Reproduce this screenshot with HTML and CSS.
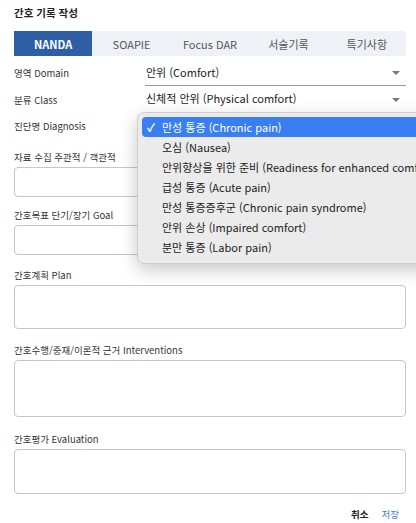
FILE: index.html
```html
<!DOCTYPE html>
<html lang="ko">
<head>
<meta charset="utf-8">
<title>간호 기록 작성</title>
<link rel="stylesheet" href="styles.css">
</head>
<body>
<div class="page">
  <h1 class="title">간호 기록 작성</h1>
  <div class="tabs">
    <div class="tab active">NANDA</div>
    <div class="tab">SOAPIE</div>
    <div class="tab">Focus DAR</div>
    <div class="tab">서술기록</div>
    <div class="tab">특기사항</div>
  </div>

  <div class="row">
    <div class="row-label">영역 Domain</div>
    <div class="select"><span>안위 (Comfort)</span><i class="caret"></i></div>
  </div>
  <div class="row">
    <div class="row-label">분류 Class</div>
    <div class="select"><span>신체적 안위 (Physical comfort)</span><i class="caret"></i></div>
  </div>
  <div class="row diag">
    <div class="row-label">진단명 Diagnosis</div>
    <div class="select"><span></span><i class="caret"></i></div>
    <div class="popup">
      <div class="opt selected"><span class="check">✓</span>만성 통증 (Chronic pain)</div>
      <div class="opt">오심 (Nausea)</div>
      <div class="opt">안위향상을 위한 준비 (Readiness for enhanced comfort)</div>
      <div class="opt">급성 통증 (Acute pain)</div>
      <div class="opt">만성 통증증후군 (Chronic pain syndrome)</div>
      <div class="opt">안위 손상 (Impaired comfort)</div>
      <div class="opt">분만 통증 (Labor pain)</div>
    </div>
  </div>

  <div class="field f1">
    <div class="field-label">자료 수집 주관적 / 객관적</div>
    <textarea class="box h30"></textarea>
  </div>
  <div class="field f2">
    <div class="field-label">간호목표 단기/장기 Goal</div>
    <textarea class="box h30"></textarea>
  </div>
  <div class="field f3">
    <div class="field-label">간호계획 Plan</div>
    <textarea class="box h44"></textarea>
  </div>
  <div class="field f4">
    <div class="field-label">간호수행/중재/이론적 근거 Interventions</div>
    <textarea class="box h57"></textarea>
  </div>
  <div class="field f5">
    <div class="field-label">간호평가 Evaluation</div>
    <textarea class="box h45"></textarea>
  </div>

  <div class="actions">
    <button class="btn cancel">취소</button>
    <button class="btn save">저장</button>
  </div>
</div>
</body>
</html>
```

FILE: styles.css
```css
html, body {
  margin: 0;
  padding: 0;
  background: #ffffff;
  overflow: hidden;
}
body {
  font-family: "Noto Sans CJK KR", "Noto Sans", sans-serif;
  color: #333;
  width: 416px;
  height: 523px;
}
.page {
  padding: 5px 10px 0 14px;
}
.title {
  margin: 0;
  font-size: 10.5px;
  line-height: 16px;
  font-weight: 700;
  color: #222;
}
.tabs {
  margin-top: 10px;
  display: grid;
  grid-template-columns: repeat(5, 1fr);
  height: 25px;
  background: #eef2f7;
  border-radius: 0 3px 3px 0;
}
.tab {
  display: flex;
  align-items: center;
  justify-content: center;
  font-size: 11px;
  color: #555;
}
.tab.active {
  background: #2e5fa4;
  color: #fff;
  font-weight: 700;
}
.row {
  display: grid;
  grid-template-columns: 131px 1fr;
  align-items: center;
  height: 26.5px;
}
.tabs + .row { margin-top: 4px; }
.row-label {
  font-size: 9.5px;
  color: #333;
}
.select {
  height: 26px;
  box-sizing: border-box;
  border-bottom: 1px solid #9a9a9a;
  display: flex;
  align-items: center;
  justify-content: space-between;
  padding: 0 6px 2px 1px;
  font-size: 11px;
  color: #222;
}
.caret {
  width: 0;
  height: 0;
  border-left: 4px solid transparent;
  border-right: 4px solid transparent;
  border-top: 4px solid #777;
  margin-top: 3px;
}
.diag {
  position: relative;
}
.popup {
  position: absolute;
  left: 123px;
  top: -1px;
  width: 300px;
  padding: 4px 0 6px 4px;
  background: #ebebeb;
  border: 1px solid #cfcfcf;
  border-radius: 7px;
  box-shadow: 0 6px 18px rgba(0,0,0,0.22);
  z-index: 5;
}
.opt {
  height: 20px;
  line-height: 20px;
  padding-left: 20px;
  font-size: 11px;
  color: #222;
  white-space: nowrap;
  position: relative;
}
.opt.selected {
  background: #3a7ff2;
  color: #fff;
  border-radius: 4px;
}
.check {
  position: absolute;
  left: 5px;
  top: 0;
  font-size: 11px;
  font-weight: 700;
}
.f1 { margin-top: 10px; }
.f2 { margin-top: 11px; }
.f3 { margin-top: 13px; }
.f4 { margin-top: 14px; }
.f5 { margin-top: 15px; }
.field-label {
  font-size: 9.5px;
  line-height: 14px;
  color: #333;
  margin-bottom: 3px;
}
.box {
  display: block;
  width: 100%;
  box-sizing: border-box;
  border: 1px solid #c6c6c6;
  border-radius: 4px;
  resize: none;
  background: #fff;
  margin: 0;
  padding: 0;
}
.h30 { height: 30px; }
.h44 { height: 44px; }
.h57 { height: 57px; }
.h45 { height: 45px; }
.actions {
  display: flex;
  justify-content: flex-end;
  gap: 13px;
  margin-top: 12px;
  padding-right: 7px;
}
.btn {
  background: none;
  border: none;
  padding: 0;
  font-family: inherit;
  font-size: 9.5px;
  line-height: 16px;
}
.cancel { color: #222; font-weight: 700; }
.save { color: #3a7bd5; }
```
